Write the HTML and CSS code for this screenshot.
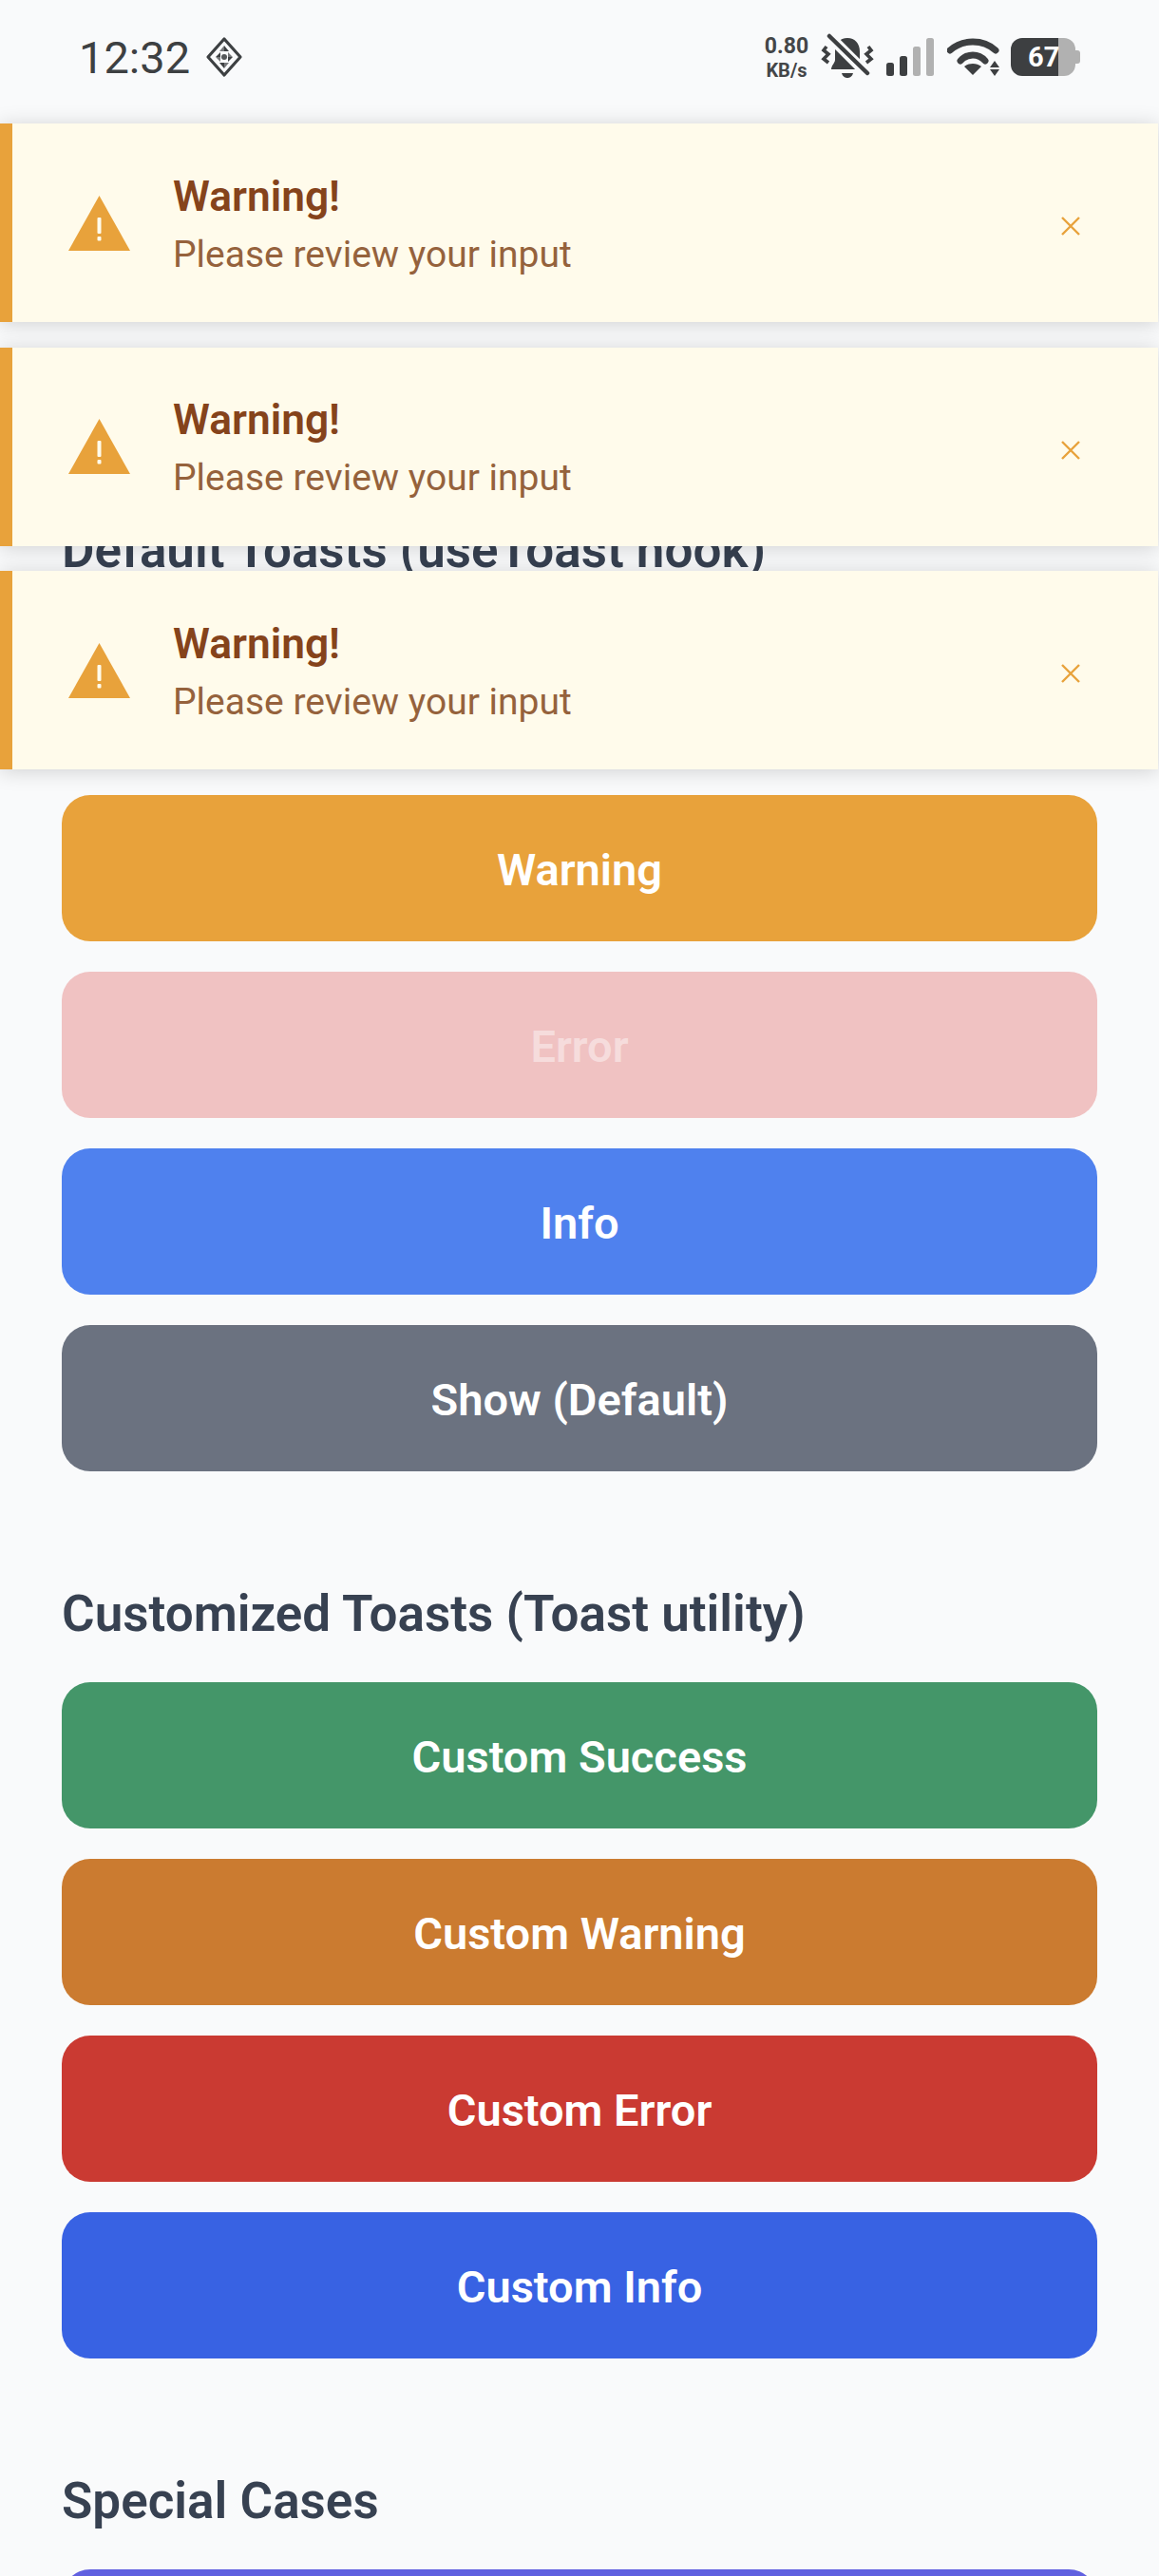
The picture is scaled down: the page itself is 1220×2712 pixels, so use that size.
FILE: index.html
```html
<html>
  <head>
    <title>Toast Demo</title>
    <meta name="viewport" content="width=device-width, initial-scale=1.0">
    <link rel="stylesheet" href="styles.css">
  </head>
  <body>
    <div class="status-bar">
      <div class="status-left">
        <span class="clock">12:32</span>
        <svg class="diamond" width="42" height="44" viewBox="0 0 42 44">
          <path d="M21 3 L38 22 L21 41 L4 22 Z" fill="none" stroke="#3d4042" stroke-width="3.2" stroke-linejoin="round"/>
          <path d="M21 10 L26 16 H21 Z M21 34 L16 28 H21 Z M12 22 L17 17 V22 Z M30 22 L25 27 V22 Z" fill="#3d4042"/>
          <path d="M21 16 H16 L21 10 Z M21 28 H26 L21 34 Z M17 22 V27 L12 22 Z M25 22 V17 L30 22 Z" fill="#77797b"/>
          <circle cx="21" cy="22" r="3" fill="#55585a"/>
        </svg>
      </div>
      <div class="status-right">
        <div class="net-speed"><span class="net-value">0.80</span><span class="net-unit">KB/s</span></div>
        <svg class="bell" width="56" height="50" viewBox="0 0 56 50">
          <path d="M28 5 C20 5 15 11 15 19 V28 C15 31 11 34 11 38 H45 C45 34 41 31 41 28 V19 C41 11 36 5 28 5 Z" fill="#3d3f41"/>
          <path d="M22 42 H34 C33 46 30 47 28 47 C26 47 23 46 22 42 Z" fill="#3d3f41"/>
          <path d="M8 2 L49 43" stroke="#f9fafb" stroke-width="11"/>
          <path d="M9 3 L49 42" stroke="#3d3f41" stroke-width="4.5" stroke-linecap="round"/>
          <path d="M6 14 L3 18 L8 22 L3 27 L8 31" fill="none" stroke="#3d3f41" stroke-width="3.6"/>
          <path d="M50 14 L53 18 L48 22 L53 27 L48 31" fill="none" stroke="#3d3f41" stroke-width="3.6"/>
        </svg>
        <svg class="signal" width="50" height="40" viewBox="0 0 50 40">
          <rect x="0" y="26" width="8" height="14" rx="2.5" fill="#3d3f41"/>
          <rect x="14" y="19" width="8" height="21" rx="2.5" fill="#3d3f41"/>
          <rect x="28" y="9" width="8" height="31" rx="2.5" fill="#b1b1b1"/>
          <rect x="42" y="0" width="8" height="40" rx="2.5" fill="#b1b1b1"/>
        </svg>
        <svg class="wifi" width="56" height="40" viewBox="0 0 56 40">
          <path d="M3 13 C16 1 38 1 51 13" fill="none" stroke="#3d3f41" stroke-width="7" stroke-linecap="round"/>
          <path d="M14 24 C21 16 33 16 40 24" fill="none" stroke="#3d3f41" stroke-width="7" stroke-linecap="round"/>
          <path d="M18 30 C23 26 31 26 36 30 L27 39 Z" fill="#3d3f41"/>
          <path d="M45 31 L50 24 L55 31 Z M45 33 H55 L50 40 Z" fill="#3d3f41"/>
        </svg>
        <div class="battery">
          <div class="battery-level"></div>
          <div class="battery-rest"></div>
          <div class="battery-tip"></div>
          <span class="battery-text">67</span>
        </div>
      </div>
    </div>

    <div class="toast-stack">
      <div class="toast">
        <svg class="toast-icon" width="65" height="58" viewBox="0 0 65 58">
          <path d="M32.5 0 L65 58 H0 Z" fill="#e8a23b"/>
          <rect x="30.5" y="23" width="4" height="17" rx="1" fill="#fffbeb"/>
          <rect x="30.5" y="43" width="4" height="4.5" rx="1" fill="#fffbeb"/>
        </svg>
        <div class="toast-body">
          <div class="toast-title">Warning!</div>
          <div class="toast-text">Please review your input</div>
        </div>
        <svg class="toast-close" width="20" height="20" viewBox="0 0 20 20">
          <path d="M1 1 L19 19 M19 1 L1 19" stroke="#e8a23b" stroke-width="2.4"/>
        </svg>
      </div>
      <div class="toast">
        <svg class="toast-icon" width="65" height="58" viewBox="0 0 65 58">
          <path d="M32.5 0 L65 58 H0 Z" fill="#e8a23b"/>
          <rect x="30.5" y="23" width="4" height="17" rx="1" fill="#fffbeb"/>
          <rect x="30.5" y="43" width="4" height="4.5" rx="1" fill="#fffbeb"/>
        </svg>
        <div class="toast-body">
          <div class="toast-title">Warning!</div>
          <div class="toast-text">Please review your input</div>
        </div>
        <svg class="toast-close" width="20" height="20" viewBox="0 0 20 20">
          <path d="M1 1 L19 19 M19 1 L1 19" stroke="#e8a23b" stroke-width="2.4"/>
        </svg>
      </div>
      <div class="toast">
        <svg class="toast-icon" width="65" height="58" viewBox="0 0 65 58">
          <path d="M32.5 0 L65 58 H0 Z" fill="#e8a23b"/>
          <rect x="30.5" y="23" width="4" height="17" rx="1" fill="#fffbeb"/>
          <rect x="30.5" y="43" width="4" height="4.5" rx="1" fill="#fffbeb"/>
        </svg>
        <div class="toast-body">
          <div class="toast-title">Warning!</div>
          <div class="toast-text">Please review your input</div>
        </div>
        <svg class="toast-close" width="20" height="20" viewBox="0 0 20 20">
          <path d="M1 1 L19 19 M19 1 L1 19" stroke="#e8a23b" stroke-width="2.4"/>
        </svg>
      </div>
    </div>

    <div class="content">
      <div class="section">
        <h2>Default Toasts (useToast hook)</h2>
        <button class="btn btn-success"></button>
        <button class="btn btn-warning">Warning</button>
        <button class="btn btn-error">Error</button>
        <button class="btn btn-info">Info</button>
        <button class="btn btn-default">Show (Default)</button>
      </div>
      <div class="section">
        <h2>Customized Toasts (Toast utility)</h2>
        <button class="btn btn-custom-success">Custom Success</button>
        <button class="btn btn-custom-warning">Custom Warning</button>
        <button class="btn btn-custom-error">Custom Error</button>
        <button class="btn btn-custom-info">Custom Info</button>
      </div>
      <div class="section">
        <h2>Special Cases</h2>
        <button class="btn btn-special"></button>
      </div>
    </div>
  </body>
</html>
```

FILE: styles.css
```css
html, body {
  height: 100%;
}

body {
  position: relative;
  margin: 0;
  height: 2712px;
  overflow: hidden;
  background-color: #f9fafb;
  font-family: Roboto, sans-serif;
}

.status-bar {
  display: flex;
  justify-content: space-between;
  align-items: center;
  height: 120px;
  padding: 0 81px 0 83px;
  box-sizing: border-box;
}

.status-left {
  display: flex;
  align-items: center;
  gap: 15px;
}

.clock {
  font-size: 47px;
  color: #3d4042;
}

.status-right {
  display: flex;
  align-items: center;
}

.net-speed {
  display: flex;
  flex-direction: column;
  align-items: center;
  width: 50px;
  margin-right: 11px;
  color: #444648;
  font-weight: 700;
}

.net-value {
  font-size: 23px;
  line-height: 27px;
}

.net-unit {
  font-size: 20px;
  line-height: 24px;
}

.bell {
  margin-right: 13px;
}

.signal {
  margin-right: 14px;
}

.wifi {
  margin-right: 11px;
}

.battery {
  position: relative;
  display: flex;
  align-items: center;
  width: 75px;
  height: 40px;
}

.battery-level {
  width: 50px;
  height: 40px;
  background: #3d3f41;
  border-radius: 12px 0 0 12px;
}

.battery-rest {
  width: 18px;
  height: 40px;
  background: #b1b1b1;
  border-radius: 0 12px 12px 0;
}

.battery-tip {
  width: 5px;
  height: 14px;
  background: #b1b1b1;
  border-radius: 0 3px 3px 0;
}

.battery-text {
  position: absolute;
  left: 18px;
  top: 3px;
  font-size: 29px;
  line-height: 34px;
  font-weight: 700;
  color: #fff;
}

.toast-stack {
  position: absolute;
  top: 130px;
  left: 0;
  right: 0;
  z-index: 5;
  display: flex;
  flex-direction: column;
  gap: 26.5px;
}

.toast {
  display: flex;
  align-items: center;
  height: 209px;
  padding: 0 82px 0 59px;
  box-sizing: border-box;
  margin-right: 1px;
  background-color: #fffbeb;
  border-left: 13px solid #e8a23b;
  box-shadow: 0 2px 20px rgba(0, 0, 0, 0.17);
}

.toast-icon {
  flex: none;
  margin-right: 45px;
}

.toast-body {
  flex: 1;
  padding-top: 7px;
}

.toast-title {
  font-size: 44.3px;
  line-height: 59px;
  font-weight: 600;
  color: #85431b;
}

.toast-text {
  font-size: 39px;
  line-height: 62px;
  color: #95623c;
}

.toast-close {
  flex: none;
  margin-top: 7px;
}

.content {
  padding: 429px 65px 0 65px;
}

.section {
  display: flex;
  flex-direction: column;
  gap: 32px;
  margin-bottom: 120px;
}

h2 {
  margin: 0 0 10px 0;
  font-size: 53px;
  line-height: 60px;
  font-weight: 600;
  color: #374151;
}

.btn {
  height: 154px;
  padding-top: 3px;
  border: none;
  border-radius: 30px;
  font-family: inherit;
  font-size: 47px;
  font-weight: 600;
  color: #fff;
}

.btn-success { background-color: #449669; }
.btn-warning { background-color: #e8a23b; }
.btn-error { background-color: #f0c2c2; color: #f6dcdc; }
.btn-info { background-color: #4f81ee; }
.btn-default { background-color: #6b7280; }
.btn-custom-success { background-color: #449669; }
.btn-custom-warning { background-color: #cb7b30; }
.btn-custom-error { background-color: #ca3a32; }
.btn-custom-info { background-color: #3862e3; }
.btn-special { background-color: #6060e0; }
```
